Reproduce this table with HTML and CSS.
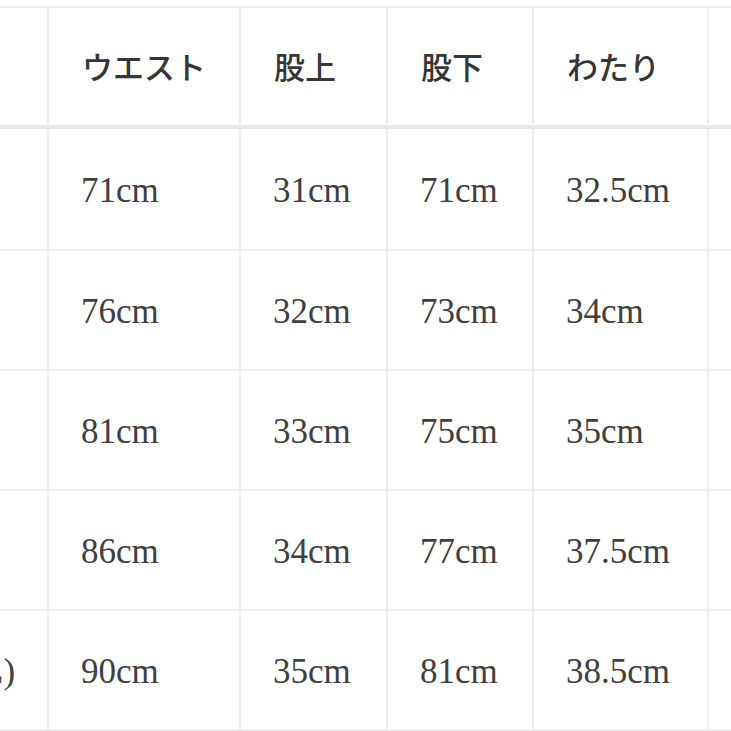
FILE: index.html
```html
<!DOCTYPE html>
<html lang="ja">
<head>
<meta charset="utf-8">
<title>サイズ表</title>
<link rel="stylesheet" href="styles.css">
</head>
<body>
<div class="frame">
  <div class="sheet">
    <div class="cell head">サイズ</div>
    <div class="cell head">ウエスト</div>
    <div class="cell head">股上</div>
    <div class="cell head">股下</div>
    <div class="cell head">わたり</div>
    <div class="cell head">裾幅</div>

    <div class="cell">S</div>
    <div class="cell">71cm</div>
    <div class="cell">31cm</div>
    <div class="cell">71cm</div>
    <div class="cell">32.5cm</div>
    <div class="cell">19cm</div>

    <div class="cell">M</div>
    <div class="cell">76cm</div>
    <div class="cell">32cm</div>
    <div class="cell">73cm</div>
    <div class="cell">34cm</div>
    <div class="cell">20cm</div>

    <div class="cell">L</div>
    <div class="cell">81cm</div>
    <div class="cell">33cm</div>
    <div class="cell">75cm</div>
    <div class="cell">35cm</div>
    <div class="cell">21cm</div>

    <div class="cell">XL</div>
    <div class="cell">86cm</div>
    <div class="cell">34cm</div>
    <div class="cell">77cm</div>
    <div class="cell">37.5cm</div>
    <div class="cell">22cm</div>

    <div class="cell">3L(XXL)</div>
    <div class="cell">90cm</div>
    <div class="cell">35cm</div>
    <div class="cell">81cm</div>
    <div class="cell">38.5cm</div>
    <div class="cell">23cm</div>
  </div>
</div>
</body>
</html>
```

FILE: styles.css
```css
html, body {
  margin: 0;
  padding: 0;
  background: #ffffff;
  overflow: hidden;
  width: 731px;
  height: 731px;
}

.frame {
  width: 731px;
  height: 731px;
  overflow: hidden;
  padding-top: 6px;
  box-sizing: border-box;
}

.sheet {
  display: grid;
  grid-template-columns: 200px 192px 147px 146px 175px 200px;
  grid-template-rows: 121px 122px 120px 120px 120px 118px;
  margin-left: -151px;
  width: max-content;
  border-top: 2px solid #eeeeee;
  border-bottom: 2px solid #eeeeee;
  font-family: "Liberation Serif", "Noto Sans CJK JP", serif;
  color: #404040;
}

.cell {
  box-sizing: border-box;
  border-right: 2px solid #eeeeee;
  border-bottom: 2px solid #eeeeee;
  display: flex;
  align-items: center;
  padding-left: 32px;
  padding-top: 4px;
  font-size: 35px;
  white-space: nowrap;
}

.head {
  border-bottom: 4px solid #e8e8e8;
  font-family: "Noto Sans CJK JP", sans-serif;
  font-size: 31px;
  font-weight: 500;
  color: #363636;
  padding-left: 33px;
  padding-top: 0;
  padding-bottom: 3px;
}

.sheet .cell:nth-last-child(-n+6) {
  border-bottom: none;
}
```
